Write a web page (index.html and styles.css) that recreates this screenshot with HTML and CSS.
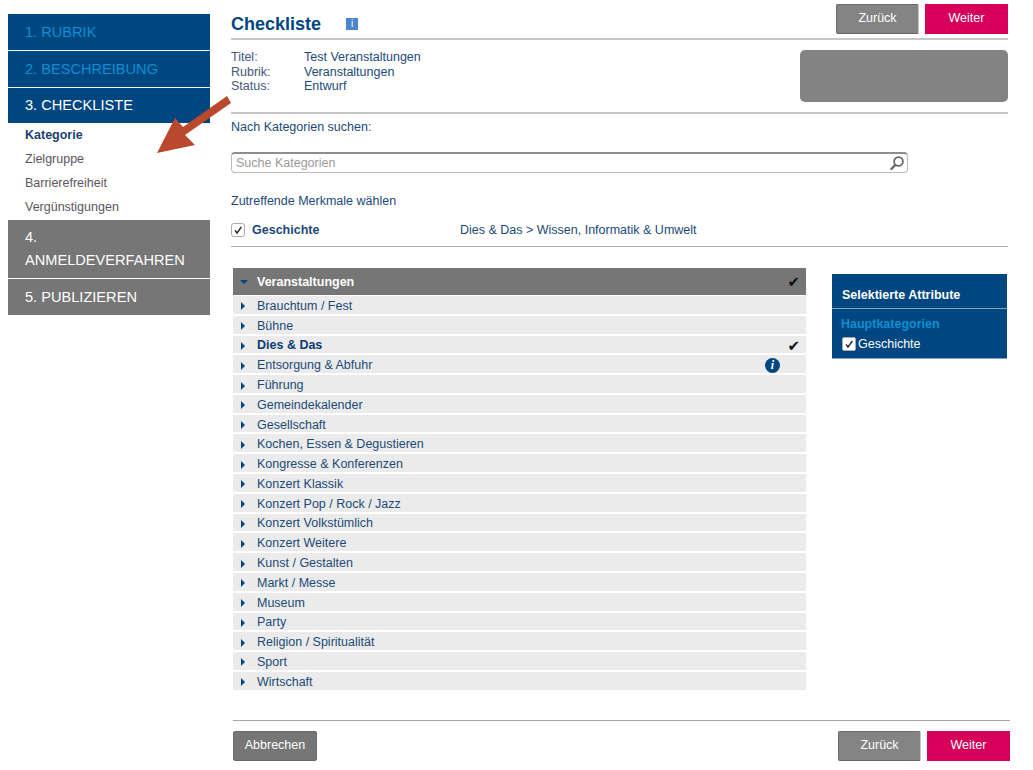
FILE: index.html
```html
<!DOCTYPE html>
<html lang="de">
<head>
<meta charset="utf-8">
<title>Checkliste</title>
<link rel="stylesheet" href="styles.css">
</head>
<body>
<div class="page">
  <nav class="side">
    <div class="step step-blue step-done">1. RUBRIK</div>
    <div class="step step-blue step-done">2. BESCHREIBUNG</div>
    <div class="step step-blue step-active">3. CHECKLISTE</div>
    <ul class="sub">
      <li class="sub-on">Kategorie</li>
      <li>Zielgruppe</li>
      <li>Barrierefreiheit</li>
      <li>Vergünstigungen</li>
    </ul>
    <div class="step step-gray step-tall">4. ANMELDEVERFAHREN</div>
    <div class="step step-gray">5. PUBLIZIEREN</div>
  </nav>

  <main class="main">
    <header class="head">
      <div class="head-title">
        <h1>Checkliste</h1>
        <span class="info-square">i</span>
      </div>
      <div class="btns">
        <span class="btn btn-gray">Zurück</span>
        <span class="btn btn-red">Weiter</span>
      </div>
    </header>

    <section class="meta">
      <dl class="meta-list">
        <dt>Titel:</dt><dd>Test Veranstaltungen</dd>
        <dt>Rubrik:</dt><dd>Veranstaltungen</dd>
        <dt>Status:</dt><dd>Entwurf</dd>
      </dl>
      <div class="meta-box"></div>
    </section>

    <p class="label">Nach Kategorien suchen:</p>
    <div class="search">
      <span class="search-ph">Suche Kategorien</span>
      <svg class="search-ic" width="16" height="16" viewBox="0 0 16 16"><circle cx="9.5" cy="6.5" r="4.4" fill="none" stroke="#666" stroke-width="1.7"/><path d="M6.3 10 2.4 14" stroke="#666" stroke-width="2.4" stroke-linecap="round"/></svg>
    </div>

    <p class="label label-pick">Zutreffende Merkmale wählen</p>
    <div class="picked">
      <span class="check"><svg width="10" height="10" viewBox="0 0 10 10"><path d="M2 5.4 4 8 8.4 1.8" fill="none" stroke="#222" stroke-width="1.4"/></svg></span>
      <strong>Geschichte</strong>
      <span class="picked-path">Dies &amp; Das &gt; Wissen, Informatik &amp; Umwelt</span>
    </div>

    <div class="work">
      <div class="tree">
        <div class="tree-head">
          <span class="tri-down"></span>
          <span class="tree-name">Veranstaltungen</span>
          <span class="tick">✔</span>
        </div>
        <ul class="rows">
          <li><span class="tri"></span>Brauchtum / Fest</li>
          <li><span class="tri"></span>Bühne</li>
          <li class="row-on"><span class="tri"></span><span class="tree-name">Dies &amp; Das</span><span class="tick">✔</span></li>
          <li><span class="tri"></span>Entsorgung &amp; Abfuhr<span class="info-round">i</span></li>
          <li><span class="tri"></span>Führung</li>
          <li><span class="tri"></span>Gemeindekalender</li>
          <li><span class="tri"></span>Gesellschaft</li>
          <li><span class="tri"></span>Kochen, Essen &amp; Degustieren</li>
          <li><span class="tri"></span>Kongresse &amp; Konferenzen</li>
          <li><span class="tri"></span>Konzert Klassik</li>
          <li><span class="tri"></span>Konzert Pop / Rock / Jazz</li>
          <li><span class="tri"></span>Konzert Volkstümlich</li>
          <li><span class="tri"></span>Konzert Weitere</li>
          <li><span class="tri"></span>Kunst / Gestalten</li>
          <li><span class="tri"></span>Markt / Messe</li>
          <li><span class="tri"></span>Museum</li>
          <li><span class="tri"></span>Party</li>
          <li><span class="tri"></span>Religion / Spiritualität</li>
          <li><span class="tri"></span>Sport</li>
          <li><span class="tri"></span>Wirtschaft</li>
        </ul>
      </div>
      <aside class="attrs">
        <div class="attrs-head">Selektierte Attribute</div>
        <div class="attrs-body">
          <div class="attrs-cat">Hauptkategorien</div>
          <div class="attrs-item">
            <span class="check check-small"><svg width="10" height="10" viewBox="0 0 10 10"><path d="M2 5.4 4 8 8.4 1.8" fill="none" stroke="#222" stroke-width="1.4"/></svg></span>
            Geschichte
          </div>
        </div>
      </aside>
    </div>

    <footer class="foot">
      <span class="btn btn-gray btn-dark">Abbrechen</span>
      <div class="btns">
        <span class="btn btn-gray">Zurück</span>
        <span class="btn btn-red">Weiter</span>
      </div>
    </footer>
  </main>
</div>
<svg class="arrow" width="76" height="60" viewBox="0 0 76 60"><path d="M70 0 74 7 28 39 38 49 0 57 18 22 26 31Z" fill="#b9482c"/></svg>
</body>
</html>
```
FILE: styles.css
```css
* { box-sizing: border-box; }
html, body { margin: 0; padding: 0; }
body {
  position: relative;
  width: 1033px;
  height: 770px;
  overflow: hidden;
  background: #fff;
  color: #1c4a78;
  font-family: "Liberation Sans", Arial, sans-serif;
  font-size: 12.5px;
}
.page { display: flex; align-items: flex-start; padding: 4px 0 0 8px; }

/* sidebar */
.side { width: 202px; margin-top: 10px; flex: none; }
.step {
  padding: 9px 17px;
  font-size: 14.6px;
  line-height: 18px;
  height: 36px;
  margin-bottom: 1px;
}
.step-blue { background: #004680; }
.step-done { color: #0d8fd0; }
.step-active { color: #fff; margin-bottom: 0; height: 35px; padding-top: 8px; }
.step-gray { background: #767676; color: #fff; }
.step-tall { height: 58px; padding: 6px 17px 0; line-height: 23px; }
.sub { list-style: none; margin: 0; padding: 0 0 1px 17px; }
.sub li { height: 24px; line-height: 24px; color: #5c5560; }
.sub .sub-on { color: #1c3f6e; font-weight: bold; }

/* main */
.main { width: 777px; margin-left: 21px; flex: none; }
.head {
  display: flex;
  justify-content: space-between;
  height: 36px;
  border-bottom: 2px solid #c8c8c8;
}
.head-title { display: flex; align-items: center; padding-top: 6px; height: 34px; }
h1 { margin: 0; font-size: 18px; line-height: 22px; color: #004680; font-weight: bold; }
.info-square {
  width: 12px; height: 12px; margin-left: 25px; background: #4a86cc; color: #fff;
  font-size: 10px; line-height: 12px; text-align: center;
}
.btns { display: flex; gap: 6px; }
.btn {
  display: block; width: 83px; height: 30px; line-height: 27px; text-align: center; color: #fff;
  font-size: 12.5px;
}
.btn-gray { background: #848484; border: 1px solid #6c6c6c; border-right-color: #c4c4c4; border-bottom-color: #666; border-radius: 2px; }
.btn-dark { background: #767676; width: 84px; border-color: #6a6a6a; }
.btn-red { background: #d6005a; line-height: 29px; }

.meta { display: flex; justify-content: space-between; height: 74px; border-bottom: 2px solid #c8c8c8; padding-top: 10px; }
.meta-list { display: grid; grid-template-columns: 73px auto; grid-auto-rows: 14.5px; margin: 0; line-height: 14.5px; }
.meta-list dt { color: #44587a; }
.meta-list dd { margin: 0; }
.meta-box { width: 208px; height: 52px; background: #838383; border-radius: 5px; }

.label { margin: 0; line-height: 14px; padding-top: 6px; height: 21px; }
.label-pick { margin-top: 15px; }
.search {
  display: flex; align-items: center; justify-content: space-between;
  width: 677px; height: 21px; margin-top: 17px; padding: 0 2px 0 4px;
  border: 1px solid #bbb; border-top: 2px solid #8e8e8e; border-radius: 4px;
  color: #9a9a9a;
}
.picked { display: flex; align-items: center; height: 22px; margin-top: 10px; }
.picked strong { margin-left: 7px; width: 208px; font-weight: bold; color: #1c4a78; }
.check {
  display: inline-flex; align-items: center; justify-content: center;
  width: 14px; height: 14px; background: #fff; border: 1px solid #aaa; border-radius: 3px;
}
.picked-path { color: #1c4a78; }

.work { display: flex; align-items: flex-start; margin: 5px 0 0 2px; padding-top: 22px; position: relative; }
.work::before { content: ""; position: absolute; top: 0; left: -2px; width: 777px; height: 1px; background: #aaa; }
.tree { width: 573px; flex: none; }
.tree-head {
  display: flex; align-items: center; height: 27px; padding-left: 7px; background: #767676; color: #fff; margin-bottom: 1px;
}
.tree-name { font-weight: bold; }
.tri-down { width: 0; height: 0; border: 4.5px solid transparent; border-top: 4.5px solid #004680; border-bottom: 0; margin-right: 9px; }
.tick { margin-left: auto; margin-right: 6px; color: #111; font-size: 15px; line-height: 14px; font-family: "DejaVu Sans", sans-serif; }
.rows { list-style: none; margin: 0; padding: 0; }
.rows li {
  display: flex; align-items: center; height: 19.79px; padding: 3px 0 0 8px; background: #ebebeb; border-bottom: 2px solid #fff; line-height: 17px;
}
.rows .row-on { color: #0e3c70; }
.tri { width: 0; height: 0; border: 4px solid transparent; border-left: 4px solid #004680; border-right: 0; margin-right: 12px; }
.info-round {
  width: 15px; height: 15px; margin-left: auto; margin-right: 26px; border-radius: 50%;
  background: #004680; color: #fff; font: italic bold 12px/15px "Liberation Serif", serif; text-align: center;
}
.attrs { width: 175px; margin: 6px 0 0 26px; background: #004680; color: #fff; flex: none; border-bottom: 1px solid #7da2c4; }
.attrs-head { height: 35px; padding: 14px 0 0 10px; font-weight: bold; line-height: 14px; border-bottom: 1px solid #8aa3bd; }
.attrs-body { padding: 8px 0 6px 10px; height: 49px; }
.attrs-cat { color: #0d8fd0; font-weight: bold; line-height: 14px; margin-left: -1px; }
.attrs-item { display: flex; align-items: center; gap: 2px; margin-top: 6px; line-height: 14px; }
.check-small { width: 14px; height: 14px; border-radius: 2px; }

.foot {
  display: flex; justify-content: space-between; margin: 28px -2px 0 2px; padding-top: 10px; border-top: 1px solid #a5a5a5;
}

.arrow { position: absolute; left: 157px; top: 96px; }
```
